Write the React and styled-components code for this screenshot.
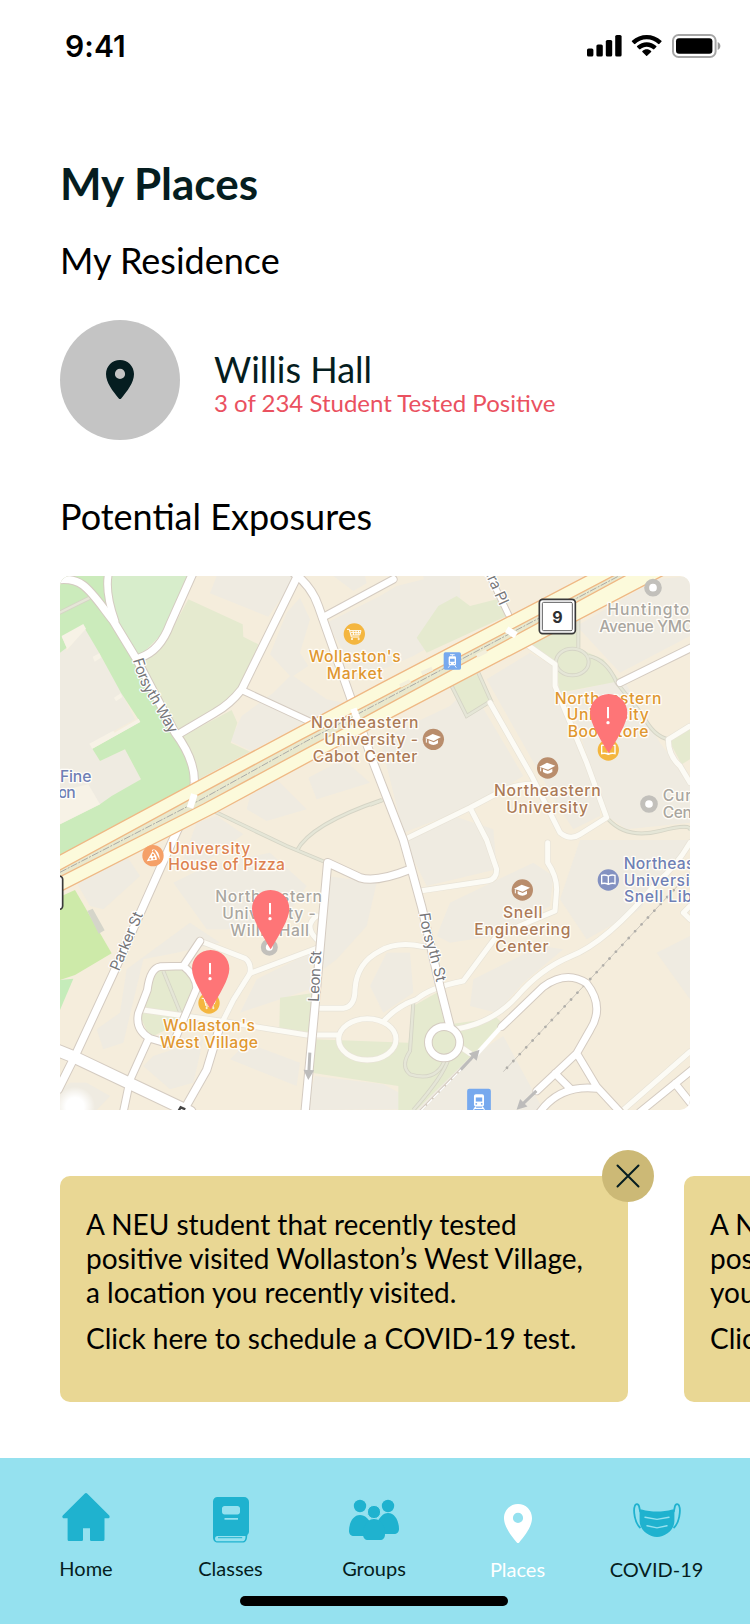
import React from 'react';
import styled, { createGlobalStyle } from 'styled-components';

const GlobalStyle = createGlobalStyle`
  * { box-sizing: border-box; }
  body { margin: 0; background: #fff; font-family: Lato, "Liberation Sans", sans-serif; }
  h1, h2, p { margin: 0; }
`;

const ink = '#051d20';

const Screen = styled.div`
  width: 750px;
  height: 1624px;
  display: flex;
  flex-direction: column;
  overflow: hidden;
  background: #fff;
`;

const StatusBar = styled.header`
  height: 91px;
  flex: none;
  display: flex;
  justify-content: space-between;
  align-items: center;
  padding: 0 29px 0 65px;
`;

const Clock = styled.span`
  font: 600 30px/36px Inter, "Liberation Sans", sans-serif;
  letter-spacing: 0.1px;
  color: #000;
`;

const Content = styled.main`
  flex: 1;
  padding: 66px 60px 0;
  min-height: 0;
`;

const Title = styled.h1`
  font-size: 44px;
  line-height: 53px;
  font-weight: 700;
  color: ${ink};
`;

const Heading = styled.h2`
  font-size: 36px;
  line-height: 43px;
  font-weight: 400;
  color: #000;
  margin-top: ${(p) => p.$gap}px;
`;

const Residence = styled.section`
  display: flex;
  align-items: center;
  gap: 34px;
  margin-top: 38px;
`;

const Avatar = styled.div`
  width: 120px;
  height: 120px;
  padding-bottom: 1px;
  border-radius: 50%;
  background: #c4c4c4;
  color: ${ink};
  display: flex;
  align-items: center;
  justify-content: center;
`;

const ResidenceText = styled.div`
  padding-top: 5px;
`;

const PlaceName = styled.p`
  font-size: 36px;
  line-height: 43px;
  color: ${ink};
`;

const CaseCount = styled.p`
  font-size: 24px;
  line-height: 29px;
  margin-top: -3px;
  color: #ea5160;
`;

const MapFrame = styled.section`
  width: 630px;
  height: 534px;
  margin-top: 38px;
  border-radius: 10px 10px 10px 0;
  overflow: hidden;
  svg { display: block; }
`;

const Alerts = styled.section`
  display: flex;
  gap: 56px;
  margin-top: 66px;
`;

const AlertCard = styled.article`
  position: relative;
  flex: none;
  width: 568px;
  height: 226px;
  border-radius: 10px;
  background: #e9d794;
  padding: 31px 26px;
  font-size: 28px;
  line-height: 34px;
  color: #000;
  white-space: nowrap;
`;

const AlertAction = styled.p`
  margin-top: 12px;
`;

const CloseButton = styled.button`
  position: absolute;
  top: -26px;
  right: -26px;
  width: 52px;
  height: 52px;
  padding: 0;
  border: 0;
  border-radius: 50%;
  background: #ccb976;
  display: flex;
  align-items: center;
  justify-content: center;
`;

const TabBar = styled.nav`
  flex: none;
  height: 166px;
  background: #95e1ef;
  display: flex;
  flex-direction: column;
  justify-content: space-between;
  padding: 34px 0 18px;
`;

const Tabs = styled.div`
  margin-left: 13px;
  display: grid;
  grid-template-columns: 146px 143px 144px 143px 135px;
`;

const Tab = styled.a`
  display: flex;
  flex-direction: column;
  align-items: center;
  gap: ${(p) => p.$gap || 12}px;
  font-size: 20px;
  line-height: 24px;
  color: ${(p) => (p.$active ? '#fff' : ink)};
  svg { color: ${(p) => (p.$active ? '#fff' : '#1fb2cf')}; }
`;

const PinBox = styled.span`
  height: 52px;
  display: flex;
  align-items: flex-end;
  padding-bottom: 1px;
`;

const HomeIndicator = styled.div`
  width: 268px;
  height: 10px;
  margin-left: 240px;
  border-radius: 5px;
  background: #000;
`;

const StatusIcons = () => (
  <svg width="134" height="24" viewBox="0 0 134 24">
    <rect x="0" y="14.500" width="6.400" height="8" rx="1.6" />
    <rect x="9.400" y="10.500" width="6.400" height="12" rx="1.6" />
    <rect x="18.800" y="5.900" width="6.400" height="16.600" rx="1.6" />
    <rect x="28.200" y="1" width="6.400" height="21.500" rx="1.6" />
    <g transform="translate(44.4 0.900)">
      <path d="M15.3 4.4c4.4 0 8.500 1.700 11.600 4.700.200.200.6.200.9 0l2.200-2.300c.3-.3.3-.7 0-.9C21.800-2 8.900-2 .6 5.900c-.3.200-.3.600 0 .9l2.200 2.300c.3.200.700.200.9 0 3.100-3 7.200-4.700 11.600-4.700z" />
      <path d="M15.300 11.900c2.400 0 4.700.9 6.500 2.500.3.200.700.2.9 0l2.200-2.300c.300-.3.300-.7 0-.9-5.400-5.100-13.700-5.100-19.200 0-.3.200-.3.600 0 .9l2.200 2.300c.3.2.6.2.9 0 1.800-1.600 4.100-2.500 6.500-2.500z" />
      <path d="M19.700 17c.3-.3.3-.700 0-.9-2.500-2.200-6.200-2.200-8.700 0-.3.200-.3.600 0 .9l3.800 3.900c.2.300.7.300.9 0z" />
    </g>
    <rect x="86" y="1" width="42.600" height="22" rx="5.600" fill="none" stroke="#000" strokeOpacity=".35" strokeWidth="2" />
    <rect x="89" y="4.200" width="36.400" height="15.600" rx="3" />
    <path d="M130.700 8v8c1.600-.7 2.700-2.200 2.700-4s-1.100-3.300-2.700-4z" opacity=".4" />
  </svg>
);

const PinIcon = () => (
  <svg width="28" height="39" viewBox="0 0 28 39">
    <path fill="currentColor" fillRule="evenodd" d="M14 0C6.200 0 0 6.200 0 14c0 8.500 7 17.500 12.800 24.400.7.800 1.700.8 2.400 0C21 31.500 28 22.500 28 14 28 6.200 21.800 0 14 0zm0 19a5.100 5.100 0 1 1 0-10.200A5.100 5.100 0 0 1 14 19z" />
  </svg>
);

const TabPin = () => <PinBox><PinIcon /></PinBox>;

const HomeIcon = () => (
  <svg width="52" height="52" viewBox="0 0 52 52">
    <path fill="currentColor" d="M24.600 1.700a2 2 0 0 1 2.800 0L49 23.200c1.300 1.500.4 3.100-1.100 3.100h-3.400v21c0 1.200-.7 1.800-1.800 1.800h-11c-1 0-1.700-.6-1.700-1.700V36.200h-7v11.200c0 1.100-.6 1.700-1.700 1.700h-12c-1.100 0-1.700-.6-1.700-1.700V26.300H4c-1.700 0-2.300-1.800-1-3.100z" />
  </svg>
);

const BookIcon = () => (
  <svg width="52" height="52" viewBox="0 0 52 52">
    <path fill="currentColor" fillRule="evenodd" d="M12.500 5h26.500a5 5 0 0 1 5 5v29.500c0 2.500-1.600 2.500-1.800 4.500-.2 4-1.200 6.600-5.200 6.600H13c-3 0-5-2-5-5V9.500C8 7 10 5 12.500 5zM19.500 14c-1.300 0-2.500 1.200-2.500 2.500v3.500c0 1.300 1.200 2.500 2.500 2.500h13c1.300 0 2.500-1.200 2.500-2.500v-3.500c0-1.300-1.200-2.500-2.500-2.500zM19.500 25.900v1.900h13.500v-1.900zM12.500 44c-3.300 0-3.300 5.300 0 5.300H37c3 0 3.500-2 3.500-5.300z" />
    <path stroke="currentColor" strokeWidth="1" d="M13 45.700h24.200" />
  </svg>
);

const GroupIcon = () => (
  <svg width="52" height="52" viewBox="0 0 52 52" fill="currentColor">
    <circle cx="12" cy="14" r="6.200" />
    <circle cx="40" cy="14" r="6.200" />
    <path d="M12 23c5 0 9 4 11 9v12H6c-3 0-5-2-5-5 0-8 4-16 11-16zM40 21c-5 0-9 5-11 10v11h17c3 0 5-2 5-5 0-8-4-16-11-16z" />
    <circle cx="26" cy="20" r="6.600" stroke="#95e1ef" strokeWidth="1" />
    <path d="M26 27c7.500 0 11 8 11 15 0 4-2 6-5 6H20c-3 0-5-2-5-6 0-7 3.500-15 11-15z" />
  </svg>
);

const MaskIcon = () => (
  <svg width="52" height="52" viewBox="0 0 52 52">
    <path fill="currentColor" d="M10.600 17.500c10.300 2.700 20.500 2.700 30.800 0 1.200-.3 2 .4 2 1.600v10C43.400 38 34 45 26 45S8.600 38 8.600 29v-10c0-1.200.8-1.900 2-1.500z" />
    <path fill="none" stroke="currentColor" strokeWidth="1.800" d="M9.500 36C3.500 31 2 18 4 13.500c1-2 3.500-1.500 4 .500l1.300 6M42.500 36c6-5 7.500-18 5.500-22.500-1-2-3.500-1.500-4 .5l-1.300 6" />
    <path fill="none" stroke="#95e1ef" strokeWidth="1.400" strokeLinecap="round" d="M14 25.300l12 2.100 12-2.100M16 33.700l10 2.200 10-2.200" />
  </svg>
);

const GREEN = '#cbebbb';
const SAGE = '#e5eacf';
const BUILDING = '#efebe1';

/* Map geometry uses three units per CSS pixel. */
const buildings = [
  '0,180 20,225 75,155 120,235 185,350 225,430 90,505 120,555 195,520 243,610 120,685 0,745',
  '470,0 710,0 625,122 450,52',
  '720,65 750,130 720,230 745,270 700,300 800,370 850,380 620,500 575,525 510,495 545,420 640,350 690,300 630,235 680,110',
  '820,0 915,0 920,22 880,45',
  '960,60 1010,30 1130,0 1220,150 1060,240 900,310 800,140',
  '570,660 650,610 740,700 620,735 560,700',
  '745,605 850,550 930,620 770,670',
  '410,740 470,720 550,775 420,870 370,850',
  '960,490 1170,390 1230,330 1390,600 1240,690 1030,770',
  '1280,310 1410,230 1480,270 1500,350 1620,680 1620,720 1540,760 1500,700',
  '1520,350 1690,310 1800,500 1890,620 1890,740 1700,760 1640,720',
  '1550,150 1790,10 1890,0 1890,180 1680,290',
  '1090,0 1200,0 1200,70 1160,145 1100,100',
  '1030,790 1180,720 1300,760 1310,880 1100,930',
  '1130,1080 1170,980 1420,860 1480,900 1470,990 1300,1080 1170,1100',
  '1560,792 1890,792 1740,1000 1580,1090 1500,970',
  '1240,1210 1440,1110 1510,1120 1390,1220 1310,1310 1230,1290',
  '110,1360 180,1310 200,1180 390,1040 480,1100 350,1130 250,1150 190,1400 130,1420',
  '340,920 440,870 630,830 740,930 660,1050 500,1060 440,1060',
  '590,1210 750,1130 750,1240 540,1310',
  '250,1470 280,1440 430,1390 400,1520 330,1540 ',
  '560,1400 720,1460 710,1530 510,1450',
  '765,1500 970,1525 1110,1600 735,1602',
  '800,900 950,920 920,1050 830,1150 790,1180',
  '980,1130 1050,1130 1060,1250 970,1310 930,1230',
  '1220,1450 1330,1380 1450,1602 1070,1602',
  '50,920 200,840 240,900 130,1000 90,990',
  '1790,1130 1890,1080 1890,1270 1840,1200',
  '30,1520 80,1520 150,1560 110,1602 0,1602 0,1540',
];

const greens = [
  ['0,0 150,0 165,130 230,245 345,470 405,560 405,625 50,812 0,838 0,745 120,685 155,660 243,610 195,520 120,555 97,518 240,437 183,350 120,235 70,150 5,182 20,215 0,230', GREEN],
  ['150,0 385,0 320,160 235,245 165,130', '#d7edcb'],
  ['385,70 548,145 550,182 595,205 545,340 480,395 355,475 240,250 320,190', SAGE],
  ['360,485 515,402 532,440 512,500 570,527 412,612', SAGE],
  ['1135,90 1190,60 1230,90 1310,70 1340,120 1100,230 1070,185', SAGE],
  ['1430,190 1555,130 1550,215 1630,250 1680,315 1500,350 1485,270 1400,205', SAGE],
  ['1175,330 1255,290 1295,375 1220,420', SAGE],
  ['1890,460 1825,490 1865,565 1890,550', SAGE],
  ['285,1180 380,1175 410,1240 360,1340 270,1385 235,1310', SAGE],
  ['660,1265 765,1250 755,1380 658,1360', SAGE],
  ['760,1390 1045,1400 1060,1290 1130,1250 1170,1345 1310,1325 1330,1345 1070,1602 1015,1602 1015,1530 755,1490', SAGE],
  ['0,962 45,942 155,1132 45,1197 0,1212', '#cdeaa9'],
  ['0,1212 40,1208 0,1302', '#c5ecba'],
];

const paths = [
  'M-5 112L90 65',
  'M460 705L680 810L795 858M965 672Q750 745 710 825',
  'M1175 330L1220 420L1293 375L1255 290',
  'M1555 130V215M1585 240Q1640 250 1670 320L1750 420Q1780 480 1825 490M1645 730Q1700 790 1800 765T1890 765',
  'M1060 1280L1050 1425Q1020 1470 1050 1495Q1130 1520 1155 1450M1165 1450Q1150 1500 1060 1602',
  'M310 1185L365 1320',
  'M930 687L970 672',
];

const lanes = [
  'M1290 380L1415 600L1500 770Q1530 795 1560 775L1640 725L1580 560L1485 330V265L1400 205',
  'M1035 790L1230 695L1315 650Q1360 625 1415 625M1230 695L1280 792L1310 880Q1310 910 1285 914L1085 944',
  'M1463 800V860Q1490 900 1490 940L1485 1005Q1400 1040 1310 1080L1210 1215Q1110 1235 1070 1270Q1010 1290 970 1337',
  'M1190 1359Q1300 1340 1370 1262Q1440 1180 1530 1142Q1640 1100 1790 920Q1850 870 1890 800',
  'M250 1302L480 1335L740 1377H835M570 1192L770 1117M775 1297H850Q885 1292 885 1240Q890 1160 960 1125Q1010 1095 1090 1112',
  'M420 1095L555 1147Q575 1162 570 1192L520 1272L480 1352',
  'M770 1020Q730 1050 770 1090',
  'M1690 1602L1890 1427',
  'M1890 450L1825 490Q1825 540 1860 570L1890 620',
  'M1890 990L1870 1010L1890 1030',
  'M1205 1415L1230 1432',
];

const roads = [
  ['M-10 12C70 0 90 45 160 135L230 250L345 470Q405 550 403 620L400 660L335 800L160 1192L45 1440L-5 1540', 22],
  ['M145 -5Q135 50 165 135', 20],
  ['M397 -5L330 145Q300 225 240 245', 22],
  ['M715 -5L545 340Q510 385 465 410L355 475', 22],
  ['M545 342L750 437', 18],
  ['M700 -10Q755 30 775 90L870 360L940 560L1030 792L1055 882L1085 992L1140 1232L1170 1350', 22],
  ['M787 125L1000 10', 20],
  ['M735 1610L765 1290L785 1060L803 860L900 905Q950 920 1050 880', 22],
  ['M-10 1422L40 1442L200 1518L390 1608', 34],
  ['M420 1095L370 1170L300 1172Q270 1177 262 1242L235 1312Q225 1362 270 1387L320 1402M370 1170Q410 1202 410 1237L345 1390M265 1390L210 1512L190 1608', 20],
  ['M480 1350L440 1482L370 1605', 22],
  ['M1325 1352L1450 1232Q1520 1182 1580 1222Q1635 1292 1590 1362L1550 1432L1430 1545M1550 1432L1610 1532L1680 1608M1485 1492L1530 1537M1440 1608Q1500 1525 1610 1537', 20],
  ['M1740 1608L1895 1482M1845 1522L1895 1585', 20],
  ['M1680 320L1900 212', 20],
  ['M1270 -40L1345 115', 16],
];

const mapLabels = [
  { lines: [["Wollaston's", 746, 257, 276], ['Market', 800, 309, 168]], color: '#df9730' },
  { lines: [['Northeastern', 753, 456, 322], ['University -', 793, 507, 281], ['Cabot Center', 758, 557, 314]], color: '#ab7a57' },
  { lines: [['Northeastern', 1302, 660, 320], ['University', 1339, 711, 245]], color: '#ab7a57' },
  { lines: [['Northeastern', 1484, 383, 320], ['University', 1520, 433, 246], ['Bookstore', 1523, 483, 242]], color: '#df9730' },
  { lines: [['Huntingto', 1642, 117, 246], ['Avenue YMC', 1618, 168, 282]], color: '#a9a6a0' },
  { lines: [['Cur', 1808, 675, 86], ['Cen', 1808, 726, 88]], color: '#a9a6a0' },
  { lines: [['Fine', 0, 617, 94], ['on', -6, 667, 53]], color: '#6f80b5' },
  { lines: [['University', 325, 833, 246], ['House of Pizza', 325, 883, 350]], color: '#dd8250' },
  { lines: [['Northeastern', 466, 978, 320], ['University -', 487, 1029, 280], ['Willis Hall', 511, 1080, 236]], color: '#a9a6a0' },
  { lines: [["Wollaston's", 309, 1366, 276], ['West Village', 300, 1416, 294]], color: '#df9730' },
  { lines: [['Snell', 1329, 1026, 118], ['Engineering', 1243, 1077, 288], ['Center', 1306, 1127, 160]], color: '#ab7a57' },
  { lines: [['Northeas', 1691, 879, 212], ['Universi', 1691, 929, 198], ['Snell Lib', 1692, 979, 204]], color: '#6f80b5' },
];

const streets = [
  ['Forsyth Way', 'M218 252Q240 330 271 372L336 488', 250],
  ['Parker St', 'M177 1187L252 1010', 186],
  ['Leon St', 'M776 1278L784 1122', 153],
  ['Forsyth St', 'M1078 1012Q1086 1080 1107 1130L1130 1222', 214],
  ['era Pl', 'M1270 -17L1320 92', 118],
];

const MapDisc = ({ x, y, color, children }) => (
  <g transform={`translate(${x} ${y})`}>
    <circle r="32" fill={color} />
    {children}
  </g>
);

const Cap = () => (
  <g fill="#fff">
    <path d="M-25 -4L-2 -16L23 -7L1 5Z" />
    <path d="M-14 3L1 9L14 2V12Q0 22 -14 12Z" />
    <path d="M-21 -2V10" stroke="#fff" strokeWidth="3" />
  </g>
);

const Cart = () => (
  <g fill="none" stroke="#fff" strokeWidth="3">
    <path d="M-22 -14H-15L-9 9H15M-14 -10H20L16 3H-10M-11 -4H18M-4 -10L-2 3M5 -10V3M13 -10L11 3" />
    <circle cx="-7" cy="15" r="2" />
    <circle cx="13" cy="15" r="2" />
  </g>
);

const OpenBook = () => (
  <path d="M0 -12Q-10 -17 -20 -14V11Q-10 8 0 13Q10 8 20 11V-14Q10 -17 0 -12V13" fill="none" stroke="#fff" strokeWidth="4" />
);

const Train = ({ x, y, s, top }) => (
  <g transform={`translate(${x} ${y}) scale(${s})`}>
    <rect x="-26" y="-26" width="52" height="52" rx="5" fill="#77a9ee" />
    <rect x="-11" y="-14" width="22" height="27" rx="4" fill="#fff" />
    <path d="M-7 -7H7V2H-7Z" fill="#77a9ee" />
    <circle cx="-6" cy="7" r="2" fill="#77a9ee" />
    <circle cx="6" cy="7" r="2" fill="#77a9ee" />
    <path d={top ? 'M-7 13L-12 20M7 13L12 20M-7 -19H7M0 -19V-14' : 'M-7 13L-12 20M7 13L12 20M-10 17H10'} stroke="#fff" strokeWidth="2.500" />
  </g>
);

const ExposurePin = ({ x, y }) => (
  <g transform={`translate(${x} ${y})`}>
    <path d="M0 -56C-32 -56 -56 -31 -56 0C-56 32 -25 78 0 122C25 78 56 32 56 0C56 -31 32 -56 0 -56Z" fill="#fe7577" />
    <path d="M-2 -17V17" stroke="#fff" strokeWidth="6" />
    <circle cx="-2" cy="30" r="5" fill="#fff" />
  </g>
);

const Arrow = ({ x, y, angle }) => (
  <g transform={`translate(${x} ${y}) rotate(${angle})`} fill="#bdbcbb">
    <path d="M-4 -40H5V12H16L0 42L-16 12H-4Z" />
  </g>
);

const ExposureMap = () => (
  <svg width="630" height="534" viewBox="0 0 1890 1602" fontFamily='Inter, "Liberation Sans", sans-serif'>
    <defs>
      <radialGradient id="corner-fade">
        <stop offset="0.45" stopColor="#fff" />
        <stop offset="1" stopColor="#fff" stopOpacity="0" />
      </radialGradient>
    </defs>
    <rect width="1890" height="1602" fill="#f5eddc" />
    <g fill={BUILDING}>
      {buildings.map((p) => <polygon key={p} points={p} />)}
    </g>
    {greens.map(([p, c]) => <polygon key={p} points={p} fill={c} />)}
    <g fill="#f7f2e6">
      <polygon points="0,645 85,625 120,685 0,745" />
      <polygon points="5,180 70,144 78,158 22,220" />
      <polygon points="88,503 160,464 163,470 236,428 241,438 97,518" />
      <polygon points="98,242 118,232 123,245 104,257" />
      <polygon points="162,365 182,352 187,363 168,376" />
    </g>
    <polygon points="82,1005 98,998 134,1063 116,1073" fill="#d5d5ca" />
    <g fill="none">
      <g stroke="#d5d4c5" strokeWidth="12">
        {paths.map((d) => <path key={d} d={d} />)}
        <ellipse cx="1537" cy="258" rx="49" ry="40" />
      </g>
      <g stroke="#e5e6d7" strokeWidth="7">
        {paths.map((d) => <path key={d} d={d} />)}
        <ellipse cx="1537" cy="258" rx="49" ry="40" />
      </g>
      <g stroke="#e8e3d7" strokeWidth="19" strokeLinecap="round" strokeLinejoin="round">
        {lanes.map((d) => <path key={d} d={d} />)}
        <ellipse cx="922" cy="1390" rx="86" ry="62" />
      </g>
      <g stroke="#fcfbf5" strokeWidth="15" strokeLinecap="round" strokeLinejoin="round">
        {lanes.map((d) => <path key={d} d={d} />)}
        <ellipse cx="922" cy="1390" rx="86" ry="62" />
      </g>
      <path d="M1890 890L1330 1487" stroke="#b7b4ad" strokeWidth="2" />
      <path d="M1860 922L1330 1487" stroke="#b0aea9" strokeWidth="8" strokeLinecap="round" strokeDasharray="0.1 28" />
      <g stroke="#d4cbc1" strokeLinecap="round" strokeLinejoin="round">
        {roads.map(([d, w]) => <path key={d} d={d} strokeWidth={w + 6} />)}
        <circle cx="1152" cy="1399" r="47" strokeWidth="26" />
      </g>
      <g stroke="#fff" strokeLinecap="round" strokeLinejoin="round">
        {roads.map(([d, w]) => <path key={d} d={d} strokeWidth={w} />)}
        <circle cx="1152" cy="1399" r="47" strokeWidth="20" />
      </g>
      <path d="M1320 1355L1240 1442L1080 1605" stroke="#d4cbc1" strokeWidth="7" />
      <path d="M1322 1355L1242 1442L1082 1605" stroke="#fff" strokeWidth="4" strokeDasharray="22 5" />
      <path d="M1323 1353L1245 1440" stroke="#fff" strokeWidth="13" />
    </g>
    <polygon points="-5,840 400,622 960,323 1585,-3 1812,-3 960,443 470,708 -5,950" fill="#fcfadb" stroke="#efb884" strokeWidth="4" />
    <polygon points="-5,885 405,662 725,490 960,368 1665,-3 1700,-3 960,398 790,490 430,684 -5,905" fill="#e9e8cd" stroke="#efb884" strokeWidth="4" />
    <path d="M0 889L430 667L740 495L960 379L1682 -3" fill="none" stroke="#aaaaa7" strokeWidth="3" strokeDasharray="22 4 6 4" />
    <path d="M1020 330L1050 315M1085 292L1117 278M1250 240L1280 225" stroke="#f3efdb" strokeWidth="12" />
    <path d="M880 398L896 440M403 655L390 695M1340 160L1368 178" stroke="#fff" strokeWidth="20" />
    <circle cx="45" cy="1592" r="60" fill="url(#corner-fade)" />

    <Arrow x={747} y={1470} angle={3} />
    <Arrow x={1230} y={1452} angle={-137} />
    <Arrow x={1400} y={1572} angle={46} />

    <g fontSize="45" fill="#77777a" stroke="#fff" strokeWidth="7" strokeLinejoin="round" paintOrder="stroke">
      {streets.map(([t, d, len], i) => (
        <React.Fragment key={t}>
          <path id={`street-${i}`} d={d} fill="none" stroke="none" />
          <text textLength={len}><textPath href={`#street-${i}`} textLength={len}>{t}</textPath></text>
        </React.Fragment>
      ))}
    </g>
    <g fontSize="47" fontWeight="500" stroke="#fffdf8" strokeWidth="8" strokeLinejoin="round" paintOrder="stroke">
      {mapLabels.map(({ lines, color }) => lines.map(([t, x, y, len]) => (
        <text key={`${t}-${x}-${y}`} x={x} y={y} textLength={len} fill={color}>{t}</text>
      )))}
    </g>

    <MapDisc x={883} y={174} color="#f4b63f"><Cart /></MapDisc>
    <MapDisc x={1120} y={490} color="#b98d6c"><Cap /></MapDisc>
    <MapDisc x={1463} y={576} color="#b98d6c"><Cap /></MapDisc>
    <MapDisc x={1387} y={942} color="#b98d6c"><Cap /></MapDisc>
    <MapDisc x={1645} y={522} color="#f4b63f"><OpenBook /></MapDisc>
    <MapDisc x={1645} y={912} color="#8391c1"><OpenBook /></MapDisc>
    <MapDisc x={447} y={1281} color="#f4b63f"><Cart /></MapDisc>
    <MapDisc x={279} y={839} color="#f5a067">
      <path d="M3 -20Q-6 -18 -2 -12L-19 17L12 12Q10 -6 -2 -12M3 -20Q20 -12 20 12" fill="#fff" />
      <circle cx="0" cy="-2" r="3.500" fill="#f5a067" />
      <circle cx="3" cy="8" r="3.500" fill="#f5a067" />
      <circle cx="-8" cy="9" r="3" fill="#f5a067" />
    </MapDisc>
    <g fill="#fff" stroke="#c2c0bb" strokeWidth="15">
      <circle cx="1779" cy="35" r="19" />
      <circle cx="1767" cy="684" r="19" />
      <circle cx="628" cy="1114" r="18" />
    </g>
    <Train x={1177} y={255} s={1} top />
    <Train x={1257} y={1574} s={1.370} />

    <rect x="1438" y="70" width="108" height="103" rx="10" fill="#fff" stroke="#39393a" strokeWidth="5" />
    <rect x="1447" y="79" width="90" height="85" rx="4" fill="#fff" stroke="#5d5d5e" strokeWidth="3" />
    <text x="1492" y="140" fontSize="48" fontWeight="700" fill="#2f2f31" textAnchor="middle">9</text>
    <rect x="-60" y="900" width="68" height="100" rx="10" fill="#fff" stroke="#39393a" strokeWidth="5" />
    <path d="M356 1604L362 1594L376 1600" fill="none" stroke="#444" strokeWidth="7" />

    <ExposurePin x={1646} y={410} />
    <ExposurePin x={632} y={998} />
    <ExposurePin x={452} y={1178} />
  </svg>
);

const tabs = [
  { label: 'Home', Icon: HomeIcon },
  { label: 'Classes', Icon: BookIcon },
  { label: 'Groups', Icon: GroupIcon },
  { label: 'Places', Icon: TabPin, active: true, gap: 13 },
  { label: 'COVID-19', Icon: MaskIcon, gap: 13 },
];

export default function App() {
  return (
    <>
      <GlobalStyle />
      <Screen>
        <StatusBar>
          <Clock>9:41</Clock>
          <StatusIcons />
        </StatusBar>
        <Content>
          <Title>My Places</Title>
          <Heading $gap={29}>My Residence</Heading>
          <Residence>
            <Avatar><PinIcon /></Avatar>
            <ResidenceText>
              <PlaceName>Willis Hall</PlaceName>
              <CaseCount>3 of 234 Student Tested Positive</CaseCount>
            </ResidenceText>
          </Residence>
          <Heading $gap={55}>Potential Exposures</Heading>
          <MapFrame><ExposureMap /></MapFrame>
          <Alerts>
            <AlertCard>
              <p>A NEU student that recently tested</p>
              <p>positive visited Wollaston’s West Village,</p>
              <p>a location you recently visited.</p>
              <AlertAction>Click here to schedule a COVID-19 test.</AlertAction>
              <CloseButton aria-label="Dismiss">
                <svg width="24" height="24" viewBox="0 0 24 24">
                  <path d="M1.500 1.500l21 21M22.500 1.500l-21 21" stroke={ink} strokeWidth="2" strokeLinecap="round" />
                </svg>
              </CloseButton>
            </AlertCard>
            <AlertCard>
              <p>A NEU student that recently tested</p>
              <p>positive visited Willis Hall, a location</p>
              <p>you recently visited.</p>
              <AlertAction>Click here to schedule a COVID-19 test.</AlertAction>
            </AlertCard>
          </Alerts>
        </Content>
        <TabBar>
          <Tabs>
            {tabs.map(({ label, Icon, active, gap }) => (
              <Tab key={label} $active={active} $gap={gap}>
                <Icon />
                {label}
              </Tab>
            ))}
          </Tabs>
          <HomeIndicator />
        </TabBar>
      </Screen>
    </>
  );
}
